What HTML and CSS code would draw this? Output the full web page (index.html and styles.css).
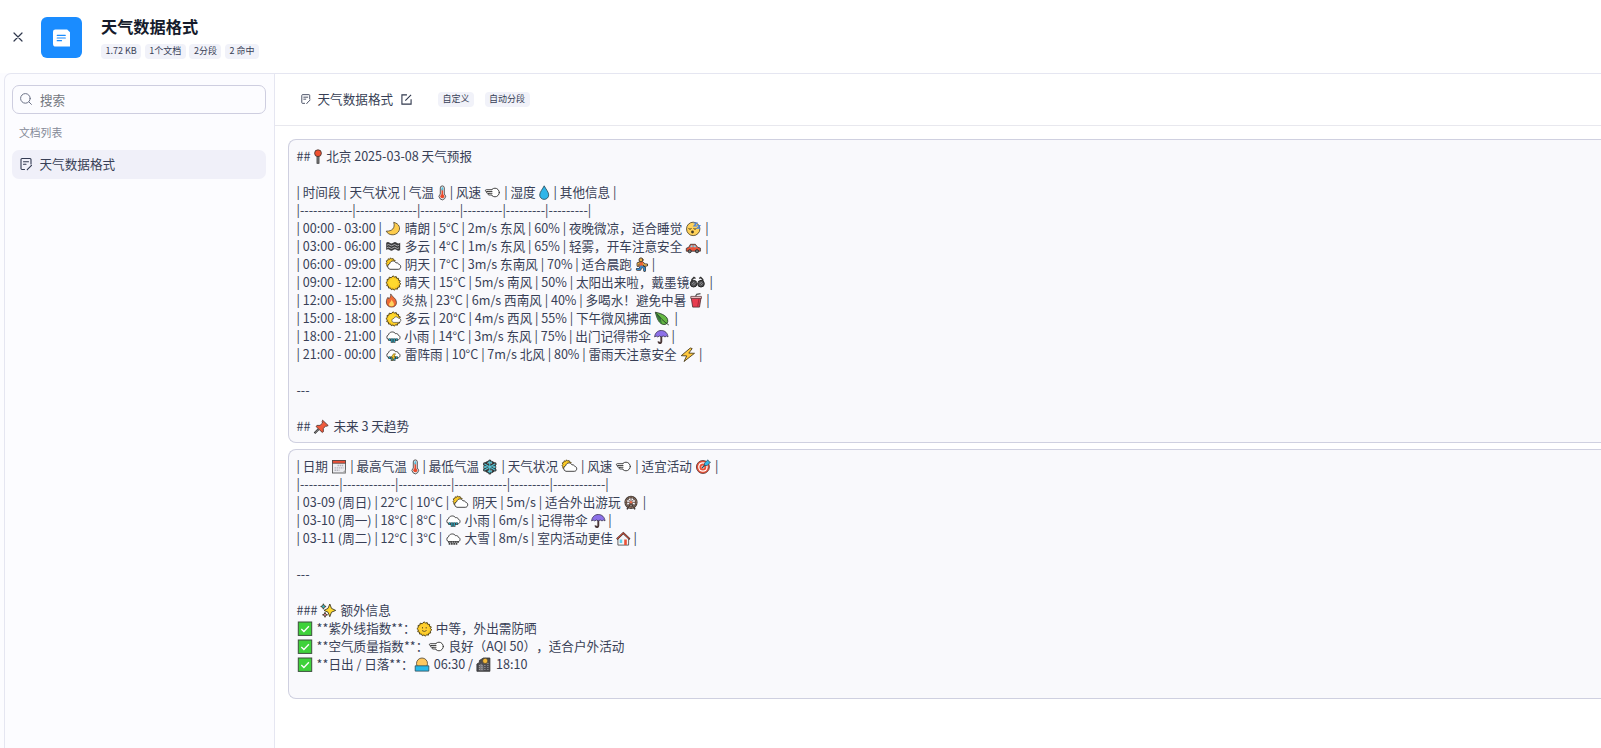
FILE: index.html
```html
<!DOCTYPE html>
<html lang="zh-CN">
<head>
<meta charset="utf-8">
<title>天气数据格式</title>
<link rel="stylesheet" href="styles.css">
</head>
<body>
<svg class="defs" aria-hidden="true">
  <defs>
    <g id="doc" fill="none" stroke="#333b52" stroke-width="1.1" stroke-linecap="round" stroke-linejoin="round"><path d="M4.500 11.500H2a1 1 0 0 1-1-1v-9a1 1 0 0 1 1-1h8a1 1 0 0 1 1 1v4.500M3.500 3.700h5M3.500 6.200h2.500M11.500 7.300L7.500 11.300l-.2.500"/></g>
    <g id="pin" stroke="#333" stroke-width=".8"><rect x="4" y="6.500" width="2" height="7.800" fill="#888"/><circle cx="5" cy="4.200" r="3.400" fill="#f1502f"/></g>
    <g id="thermo" stroke="#333" stroke-width=".8"><path d="M3.300 9V2.900a2 2 0 0 1 4 0V9a3.200 3.200 0 1 1-4 0z" fill="#e8e8ec"/><path d="M5.300 4v7" stroke="#ea4a2b" stroke-width="1.600"/><circle cx="5.300" cy="11.300" r="2" fill="#ea4a2b" stroke="none"/><path d="M5.300 2.400v3" stroke="#45c6e8" stroke-width="1.500"/></g>
    <g id="wind" fill="#fff" stroke="#333" stroke-width=".9" stroke-linecap="round" stroke-linejoin="round"><circle cx="11" cy="7.500" r="4.300"/><path d="M7.200 4.700H2.300a.9.900 0 0 0 0 1.800H3.500v1.700H5v1.700h3.500z" stroke="none"/><path d="M7.600 4.700H2.300a.9.900 0 0 0 0 1.800H8M3.500 6.500a.9.900 0 0 0 0 1.800H8M5 8.300a.8.800 0 0 0 0 1.700h2.700"/></g>
    <g id="drop"><path d="M6.200.8C4.700 4 1.700 7 1.700 9.900a4.500 4.500 0 0 0 9 0C10.700 7 7.700 4 6.200.8z" fill="#2fb5e9" stroke="#244553" stroke-width=".8"/></g>
    <g id="moon"><path d="M8.700 1.300c1.700 5.700-1.500 9-7.500 8.900 2.500 4.500 9 4.800 12.100.8 2.700-3.600 1-8.400-4.600-9.700z" fill="#fdcc4c" stroke="#49402c" stroke-width=".8"/></g>
    <g id="fog"><path d="M1.200 3.700q1.800-1.400 3.500 0t3.500 0 3.500 0 3.500 0v7.300q-1.800 1.400-3.500 0t-3.500 0-3.500 0-3.500 0z" fill="#3b3b3d"/><path d="M2 6.200q1.500-1.300 3 0t3 0 3 0 3 0M2 8.800q1.500-1.300 3 0t3 0 3 0 3 0" fill="none" stroke="#d8d8dc" stroke-width=".7"/></g>
    <g id="cloud" fill="#fff" stroke="#333" stroke-width=".9"><path d="M4 9.800a2.600 2.600 0 0 1-.5-5C4.100 1.600 9 .9 10.500 3.700c1.200-.4 2.500.2 2.800 1.500 2.600.6 2.100 4.600-.5 4.600z"/></g>
    <g id="suncloud"><path d="M5.500.8l1 1.200 1.600-.5.400 1.500 1.700.4-.8 1.400.5 1.300-6 3.900-2.100-.8.200-1.700L.9 6.700l1-1.300L1.200 3.900l1.600-.5.300-1.600 1.600.5z" fill="#fccb25" stroke="#4a3b12" stroke-width=".8"/><path d="M5 12.300a2.900 2.900 0 0 1-.3-5.600C5.500 3.400 9.700 3 11 5.900c1.300-.3 2.300.3 2.700 1.400 2.900.4 2.600 5-.4 5z" fill="#fff" stroke="#333" stroke-width=".9"/></g>
    <g id="rays"><path d="M8.300.8l1.200 1.400 1.700-.7.500 1.800 1.900.1-.1 1.900 1.800.6-.8 1.700 1.300 1.300-1.500 1.200.4 1.900-1.900.3-.4 1.900-1.800-.5-1.200 1.500-1.400-1.300-1.700.8-.8-1.700-1.900.1-.1-1.900-1.800-.5.700-1.800L.9 7.600l1.500-1.300L2 4.500l1.900-.4.300-1.900 1.900.5z" fill="#fccb25" stroke="#453810" stroke-width=".9"/></g>
    <g id="sun"><use href="#rays"/><circle cx="8.300" cy="7.900" r="4.500" fill="#ffd92e"/></g>
    <g id="sunface"><use href="#rays"/><circle cx="8.300" cy="7.900" r="4.600" fill="#ffcf31"/><path d="M6.500 6v1.500M10.200 6v1.500M6 9.500q2.300 2 4.600 0" fill="none" stroke="#4e401c" stroke-width=".8"/></g>
    <g id="sunbehind"><use href="#rays"/><circle cx="7.800" cy="7.500" r="4.300" fill="#ffd92e"/><path d="M9.100 11.400c-2.900 0-3-3.700-.2-4 .7-2 3.300-2.200 4.200-.3 3.600 0 3.600 4.300.2 4.300z" fill="#fff" stroke="#333" stroke-width=".6"/></g>
    <g id="fire"><path d="M5.700.9c.7 2.500 5.800 4.200 5.800 8.500 0 3-2.200 4.700-4.900 4.700-3.200 0-5.200-2.200-5.200-5.100C1.400 7 2 5.500 3 4.300l.8 1.600C5.300 4.500 5.900 3 5.700.9z" fill="#ef6b35" stroke="#4b3029" stroke-width=".7"/><path d="M6.700 6.500c0 2 2.400 2.700 2.300 4.900-.2 2.700-4.800 2.500-5 0C4 9.700 6.400 8.900 6.700 6.500z" fill="#ffd25e"/></g>
    <g id="rain"><use href="#cloud" y="1"/><path d="M4.500 9.500v2.500M6.900 9.500v4.300M9.300 9.500v4.300M11.700 9.500v2.500" stroke="#333" stroke-width="2.300"/><path d="M4.500 9.500v2M6.900 9.500v3.800M9.300 9.500v3.800M11.700 9.500v2" stroke="#28a4bd" stroke-width="1.300"/></g>
    <g id="storm"><use href="#rain"/><path d="M8.500 6.800l-2.300 3.700h1.600l-1 3.300 4-4.300H9l1.500-2.700z" fill="#fccb25" stroke="#554515" stroke-width=".5"/></g>
    <g id="snow"><use href="#cloud" y="1"/><path d="M3 10.900h11M3.700 12.900h9" stroke="#444" stroke-width="1.800" stroke-dasharray="1.700 .6"/></g>
    <g id="sleep"><circle cx="8.200" cy="7.900" r="6.700" fill="#ffd25a" stroke="#443b23" stroke-width=".8"/><path d="M3.500 7.500q1.500 1.500 3 0M8.500 7.500q1.500 1.500 3 0" fill="none" stroke="#443b23"/><circle cx="7.500" cy="11" r="1.400" fill="#443b23"/><path d="M8.500 2h3.200L9 5h3M12.300 4.500h2.500l-2.500 2.700H15" fill="none" stroke="#4a84df" stroke-width="1.200"/></g>
    <g id="car"><path d="M1.300 12.200V9.300l2.500-1.100 1.600-2.900h5l2.200 2.900 2.800.9v3.100z" fill="#ec5237" stroke="#333" stroke-width=".8"/><path d="M5 8.200l1.100-2h1.500v2zM8.500 8.200v-2H10l1.500 2z" fill="#80d5eb"/><circle cx="4.700" cy="12.200" r="1.600" fill="#777" stroke="#333"/><circle cx="12" cy="12.200" r="1.600" fill="#777" stroke="#333"/></g>
    <g id="run" stroke-linecap="round" stroke-linejoin="round" fill="none"><path d="M6.500 5.500L6 9l3.600 1.700v2.800M6 9l-1 3.300H2.200M5.500 5.500L3 6.500v2M7.500 6l2 2h2.200" stroke="#3a3330" stroke-width="2.800"/><path d="M6.500 5.500L6.200 9" stroke="#ed6235" stroke-width="3.400"/><path d="M6.300 9.200l3.300 1.700v2.600M6 9.300l-1 3H2.200" stroke="#3488ca" stroke-width="1.600"/><path d="M4.500 6L3 6.600v1.700M8.300 6.800l1.200 1.200h2" stroke="#efb54b" stroke-width="1.300"/><circle cx="6" cy="2.900" r="2" fill="#efb54b" stroke="#443529"/></g>
    <g id="glasses"><path d="M3 7V4.500L5 2.500l1.500 1M13.700 7V4.500l-2-2-1.500 1" fill="none" stroke="#333" stroke-width="1.500"/><circle cx="4.600" cy="8.700" r="3.300" fill="#4c4c50" stroke="#222"/><circle cx="12" cy="8.700" r="3.300" fill="#4c4c50" stroke="#222"/><path d="M2.900 9.300l2.500-2.500M4.300 10.300l2-2M10.400 9.300l2.500-2.500M11.800 10.300l2-2M7.500 7.500h1.800" stroke="#aaa" stroke-width=".8"/></g>
    <g id="cup"><path d="M6.500 3.500L7.700 1.300 11.500 .6" fill="none" stroke="#555" stroke-width="1.200"/><path d="M2.200 4.700h9.800l-1.500 9.400H3.700z" fill="#e83c4f" stroke="#4a292d" stroke-width=".8"/><path d="M1.800 3.400h10.600v2H1.800z" fill="#f8c8cc" stroke="#4a292d" stroke-width=".7"/><path d="M10 5.500L8.700 13.500" stroke="#a92839"/></g>
    <g id="leaf"><path d="M1.300 1.200c4.500 1 11 2.700 12.300 7.300.7 3-.8 5.100-3.700 5C5 13.200 3 7.500 1.300 1.200z" fill="#65b944" stroke="#29402a" stroke-width=".9"/><path d="M2 2c1 4.500 3 8.500 6 11.200L6.500 6z" fill="#357839"/><path d="M2.500 2.500c3 3.500 7 8 12.300 11.500" fill="none" stroke="#29402a" stroke-width=".9"/></g>
    <g id="umbrella"><path d="M7.300 5v7.500c0 2.200-3 1.900-2.700-.1" fill="none" stroke="#4b3838" stroke-width="1.900"/><path d="M.6 7.900C1 4 3.600 1.500 7.300 1.500s6.300 2.500 6.700 6.400q-1.500-1.600-3 0-1.800-1.800-3.700 0-1.800-1.800-3.600 0-1.600-1.600-3.100 0z" fill="#8c70e8" stroke="#383252" stroke-width=".8"/></g>
    <g id="bolt"><path d="M10.300 1L1.200 8.700l5.500.2L4 14.500 14.500 6.300l-5.700-.2 3.400-4.500z" fill="#ffc83d" stroke="#4d3f1f" stroke-width=".9"/></g>
    <g id="tack"><path d="M5.500 10.300L1.500 14.200" stroke="#333" stroke-width="2.200"/><path d="M5.500 10.300L2 13.700" stroke="#999" stroke-width=".9"/><path d="M9.600 1.200l5.600 5.300-1.700.8-1-.2-2.200 2.500.1 3.100-1.200.7-6.100-5.800.8-1.200 3.100 0 2.500-2.400-.4-1.300z" fill="#f05a3c" stroke="#472f2b" stroke-width=".8"/></g>
    <g id="calendar"><rect x="1.500" y="1.500" width="13" height="12.500" fill="#ececf0" stroke="#444" stroke-width=".8"/><path d="M1.500 1.500h13v2.800h-13z" fill="#ec5138" stroke="#444" stroke-width=".7"/><path d="M6.500 6.500h6M3.500 8.900h9M3.500 11.300h5" stroke="#b4b4bc" stroke-width="1.400" stroke-dasharray="1.500 .6"/><path d="M14.500 10.500L11 14h3.500z" fill="#aaa"/></g>
    <g id="flake" fill="none" stroke-linecap="round"><circle cx="7.800" cy="7.900" r="5.200" stroke="#333" stroke-width="2.600"/><path d="M7.800 1.900V13.900M2.500 4.900l10.600 6.100M13.100 4.900L2.500 11" stroke="#333" stroke-width="3"/><path d="M7.800 2V13.800M2.700 5l10.200 5.900M12.900 5L2.700 10.900M6 3l1.800 1.600L9.600 3M6 12.900l1.800-1.600 1.800 1.600M2.500 7.200l2 .6-2 1M13.100 7.200l-2 .6 2 1" stroke="#57c6d8" stroke-width="1.100"/></g>
    <g id="target"><circle cx="7.900" cy="8" r="6.500" fill="#ec5237" stroke="#553433" stroke-width=".8"/><circle cx="7.900" cy="8" r="4.800" fill="#fff"/><circle cx="7.900" cy="8" r="3.500" fill="#ec5237"/><circle cx="7.900" cy="8" r="1.500" fill="#fff"/><path d="M7 9l4.500-4.500" stroke="#294c5d" stroke-width="1.200"/><path d="M9.300 6.500l.2-2.500L13 .8l.7 1.700 1.800.7-3.300 3.300z" fill="#36b8e8" stroke="#294c5d" stroke-width=".7"/></g>
    <g id="wheel" fill="none"><path d="M8 8L4 14.300M8 8l4 6.300" stroke="#443934" stroke-width="1.500"/><circle cx="8" cy="7.300" r="5.300" stroke="#433a35" stroke-width="2.600"/><circle cx="8" cy="7.300" r="5.200" stroke="#b28b72" stroke-width="1" stroke-dasharray="2 .7"/><path d="M8 2v10.600M2.700 7.300h10.600M4.200 3.500l7.600 7.600M11.800 3.500l-7.600 7.600" stroke="#665047" stroke-width="1"/><circle cx="8" cy="7.300" r="1.200" fill="#ee7351"/></g>
    <g id="house"><path d="M1.900 7.500v6.600h10.700V7.500L7.300 2.500z" fill="#f4f4f6" stroke="#444" stroke-width=".8"/><path d="M.8 8.200l6.500-6.200 6.500 6.200" fill="none" stroke="#443331" stroke-width="1.900"/><path d="M1.100 8l6.200-6 6.200 6" fill="none" stroke="#ec5237" stroke-width="1"/><path d="M3.700 8.500h2.500v3.500H3.700z" fill="#5ed2ed"/><path d="M8.200 8.500h2.600V14H8.200z" fill="#ec5237"/></g>
    <g id="sparkles" stroke="#3f3b25" stroke-width=".9"><path d="M9.800 1l1.700 4.400L15.700 7.400l-4.200 1.800L9.800 13.700 8 9.200 4 7.400l4-2z" fill="#ffd92e"/><path d="M3.400.8l.8 1.900 1.900.8-1.900.8-.8 1.900-.8-1.900L.7 3.500l1.900-.8z" fill="#3bc3dd"/><path d="M5 9.300l.7 1.800 1.800.7-1.800.7L5 14.300l-.7-1.800-1.800-.7 1.800-.7z" fill="#ec88aa"/></g>
    <g id="check"><rect x="1.300" y="1" width="13.400" height="13.400" fill="#3fd23b" stroke="#3c513d" stroke-width="1"/><path d="M4.300 8l2.600 2.500 5-5.200" fill="none" stroke="#fff" stroke-width="1.300"/></g>
    <g id="sunrise"><circle cx="8" cy="6.500" r="5.500" fill="#ffc85e" stroke="#4d4231" stroke-width=".8"/><path d="M1.200 8.800h13.600v5.300H1.200z" fill="#28b9e9" stroke="#2d4b56" stroke-width=".8"/></g>
    <g id="city"><path d="M.9 14.300V7L3.400 5.500V3.500L7.400 1h6.500v13.300z" fill="#4c4c50" stroke="#333" stroke-width=".8"/><circle cx="9.200" cy="3.900" r="2.600" fill="#f4b938" stroke="#333" stroke-width=".6"/><path d="M3.400 8l2-1.500 2 2.500v4.500h-4z" fill="#77777b"/><path d="M3.400 8v6M5.900 8v5M8.900 8v6M11.900 6v7.500" stroke="#a6a6aa" stroke-width="1" stroke-dasharray="1 1"/></g>
  </defs>
</svg>

<header class="header">
  <svg class="close" viewBox="0 0 10 10"><path d="M1 1l8 8M9 1L1 9"/></svg>
  <div class="logo">
    <svg viewBox="0 0 18 18"><path d="M2.500 0H15l3 3v15H3a3 3 0 0 1-3-3V2.500A2.500 2.500 0 0 1 2.500 0z" fill="#fff"/><path d="M4.500 6.200h8.500M4.500 9h8.500M4.500 11.800h4.500" stroke="#1a8cff" stroke-width="1.300" stroke-linecap="round"/></svg>
  </div>
  <div class="heading">
    <h1>天气数据格式</h1>
    <div class="tags"><span class="tag">1.72 KB</span><span class="tag">1个文档</span><span class="tag">2分段</span><span class="tag">2 命中</span></div>
  </div>
</header>

<div class="body">
  <aside class="sidebar">
    <div class="search">
      <svg viewBox="0 0 12 12"><circle cx="5.400" cy="5.400" r="4.800"/><path d="M9 9l2.400 2.400"/></svg>
      <span>搜索</span>
    </div>
    <div class="label">文档列表</div>
    <div class="item"><svg viewBox="0 0 12 12"><use href="#doc"/></svg><span>天气数据格式</span></div>
  </aside>
  <main class="main">
    <div class="toolbar">
      <svg class="file" viewBox="0 0 12 12"><use href="#doc"/></svg>
      <span class="name">天气数据格式</span>
      <svg class="edit" viewBox="0 0 12 12"><path d="M6.500 1H1v10h10V5.700M4.700 7.300L11 1"/></svg>
      <span class="tag">自定义</span><span class="tag">自动分段</span>
    </div>
    <div class="cards">
      <section class="card">
        <p>## <svg class="e slim"><use href="#pin"/></svg> 北京 2025-03-08 天气预报</p>
        <p></p>
        <p>| 时间段 | 天气状况 | 气温 <svg class="e slim"><use href="#thermo"/></svg> | 风速 <svg class="e"><use href="#wind"/></svg> | 湿度 <svg class="e short"><use href="#drop"/></svg> | 其他信息 |</p>
        <p>|------------|--------------|---------|---------|---------|---------|</p>
        <p>| 00:00 - 03:00 | <svg class="e"><use href="#moon"/></svg> 晴朗 | 5°C | 2m/s 东风 | 60% | 夜晚微凉，适合睡觉 <svg class="e"><use href="#sleep"/></svg> |</p>
        <p>| 03:00 - 06:00 | <svg class="e"><use href="#fog"/></svg> 多云 | 4°C | 1m/s 东风 | 65% | 轻雾，开车注意安全 <svg class="e"><use href="#car"/></svg> |</p>
        <p>| 06:00 - 09:00 | <svg class="e"><use href="#suncloud"/></svg> 阴天 | 7°C | 3m/s 东南风 | 70% | 适合晨跑 <svg class="e mid"><use href="#run"/></svg> |</p>
        <p>| 09:00 - 12:00 | <svg class="e"><use href="#sun"/></svg> 晴天 | 15°C | 5m/s 南风 | 50% | 太阳出来啦，戴墨镜<svg class="e"><use href="#glasses"/></svg> |</p>
        <p>| 12:00 - 15:00 | <svg class="e mid"><use href="#fire"/></svg> 炎热 | 23°C | 6m/s 西南风 | 40% | 多喝水！避免中暑 <svg class="e mid"><use href="#cup"/></svg> |</p>
        <p>| 15:00 - 18:00 | <svg class="e"><use href="#sunbehind"/></svg> 多云 | 20°C | 4m/s 西风 | 55% | 下午微风拂面 <svg class="e"><use href="#leaf"/></svg> |</p>
        <p>| 18:00 - 21:00 | <svg class="e snug"><use href="#rain"/></svg> 小雨 | 14°C | 3m/s 东风 | 75% | 出门记得带伞 <svg class="e near"><use href="#umbrella"/></svg> |</p>
        <p>| 21:00 - 00:00 | <svg class="e"><use href="#storm"/></svg> 雷阵雨 | 10°C | 7m/s 北风 | 80% | 雷雨天注意安全 <svg class="e snug"><use href="#bolt"/></svg> |</p>
        <p></p>
        <p>---</p>
        <p></p>
        <p>## <svg class="e"><use href="#tack"/></svg> 未来 3 天趋势</p>
      </section>
      <section class="card">
        <p>| 日期 <svg class="e snug"><use href="#calendar"/></svg> | 最高气温 <svg class="e slim"><use href="#thermo"/></svg> | 最低气温 <svg class="e snug"><use href="#flake"/></svg> | 天气状况 <svg class="e"><use href="#suncloud"/></svg> | 风速 <svg class="e"><use href="#wind"/></svg> | 适宜活动 <svg class="e"><use href="#target"/></svg> |</p>
        <p>|---------|------------|------------|------------|---------|------------|</p>
        <p>| 03-09 (周日) | 22°C | 10°C | <svg class="e"><use href="#suncloud"/></svg> 阴天 | 5m/s | 适合外出游玩 <svg class="e snug"><use href="#wheel"/></svg> |</p>
        <p>| 03-10 (周一) | 18°C | 8°C | <svg class="e snug"><use href="#rain"/></svg> 小雨 | 6m/s | 记得带伞 <svg class="e near"><use href="#umbrella"/></svg> |</p>
        <p>| 03-11 (周二) | 12°C | 3°C | <svg class="e snug"><use href="#snow"/></svg> 大雪 | 8m/s | 室内活动更佳 <svg class="e near"><use href="#house"/></svg> |</p>
        <p></p>
        <p>---</p>
        <p></p>
        <p>### <svg class="e"><use href="#sparkles"/></svg> 额外信息</p>
        <p><svg class="e"><use href="#check"/></svg> **紫外线指数**：<svg class="e"><use href="#sunface"/></svg> 中等，外出需防晒</p>
        <p><svg class="e"><use href="#check"/></svg> **空气质量指数**：<svg class="e"><use href="#wind"/></svg> 良好（AQI 50），适合户外活动</p>
        <p><svg class="e"><use href="#check"/></svg> **日出 / 日落**：<svg class="e"><use href="#sunrise"/></svg> 06:30 / <svg class="e"><use href="#city"/></svg> 18:10</p>
        <p></p>
      </section>
    </div>
  </main>
</div>
</body>
</html>
```

FILE: styles.css
```css
* { box-sizing: border-box; }
html, body { height: 100%; }
body {
  margin: 0;
  overflow: hidden;
  display: flex;
  flex-direction: column;
  background: #fff;
  color: #383f56;
  font: 12.6px/18px "Noto Sans CJK SC", "Noto Sans", sans-serif;
  text-spacing-trim: space-all;
}
.defs { position: absolute; width: 0; height: 0; }
svg { flex: none; }
.header {
  flex: none;
  height: 73px;
  display: flex;
  align-items: center;
  padding: 1px 0 0 13px;
}
.close { width: 10px; height: 10px; fill: none; stroke: #30384d; stroke-width: 1.2; stroke-linecap: round; }
.logo {
  width: 41px;
  height: 41px;
  margin: 1px 0 0 18px;
  border-radius: 6px;
  background: #1a8cff;
  display: flex;
  align-items: center;
  justify-content: center;
}
.logo svg { width: 17px; height: 18px; }
.heading { margin-left: 19px; }
h1 { margin: 0; font-size: 16.2px; line-height: 20px; font-weight: 600; color: #151b2b; }
.tags { display: flex; gap: 3.6px; margin-top: 8px; }
.tag {
  height: 15px;
  padding: 0 4.5px;
  border-radius: 4px;
  background: #f1f2f9;
  font-size: 9px;
  line-height: 14px;
  white-space: nowrap;
}
.body { flex: 1; min-height: 0; display: flex; padding-left: 4px; background: #fcfcff; }
.sidebar {
  flex: none;
  width: 271px;
  padding: 11px 8px 0 7px;
  border: solid #e5e6f1;
  border-width: 1px 1px 0 1px;
  border-top-left-radius: 7px;
  background: #fcfcff;
}
.search {
  height: 29px;
  display: flex;
  align-items: center;
  padding-left: 7px;
  border: 1px solid #cecee0;
  border-radius: 7px;
  color: #747880;
}
.search svg { width: 12px; height: 12px; margin: 0 8px 1px 0; fill: none; stroke: #6d7387; stroke-width: 1; stroke-linecap: round; }
.label { margin: 10px 0 9px 7px; font-size: 10.8px; line-height: 17px; color: #858a98; }
.item {
  height: 29px;
  display: flex;
  align-items: center;
  gap: 7.5px;
  padding: 0 0 2px 8px;
  border-radius: 7px;
  background: #f0f0f9;
}
.item svg { width: 12px; height: 12px; overflow: visible; }
.main { flex: 1; min-width: 0; margin-left: -1px; background: #fff; border: solid #e5e6f1; border-width: 1px 0 0 1px; }
.toolbar {
  height: 52px;
  display: flex;
  align-items: center;
  padding: 0 0 1px 26px;
  border-bottom: 1px solid #e8e8ee;
}
.file { width: 9.5px; height: 10px; overflow: visible; }
.name { margin: 0 7.5px 0 7px; }
.edit { width: 11px; height: 11px; margin-right: 26.5px; fill: none; stroke: #30384d; stroke-width: 1.2; }
.toolbar .tag + .tag { margin-left: 10.5px; }
.cards { padding: 13px 0 0 13px; }
.card {
  padding: 7px 7px 7px 7.5px;
  margin-bottom: 6px;
  border: 1px solid #cfd0e0;
  border-right: 0;
  border-radius: 8px 0 0 8px;
  background: #f9f9fc;
}
.card p { height: 18px; margin: 0; white-space: pre; }
.e { width: 17.3px; height: 16px; vertical-align: -3.5px; overflow: visible; }
.e.slim { width: 10px; }
.e.short { width: 12.4px; }
.e.mid { width: 14.3px; }
.e.near { width: 14.9px; }
.e.snug { width: 16.7px; }
```
